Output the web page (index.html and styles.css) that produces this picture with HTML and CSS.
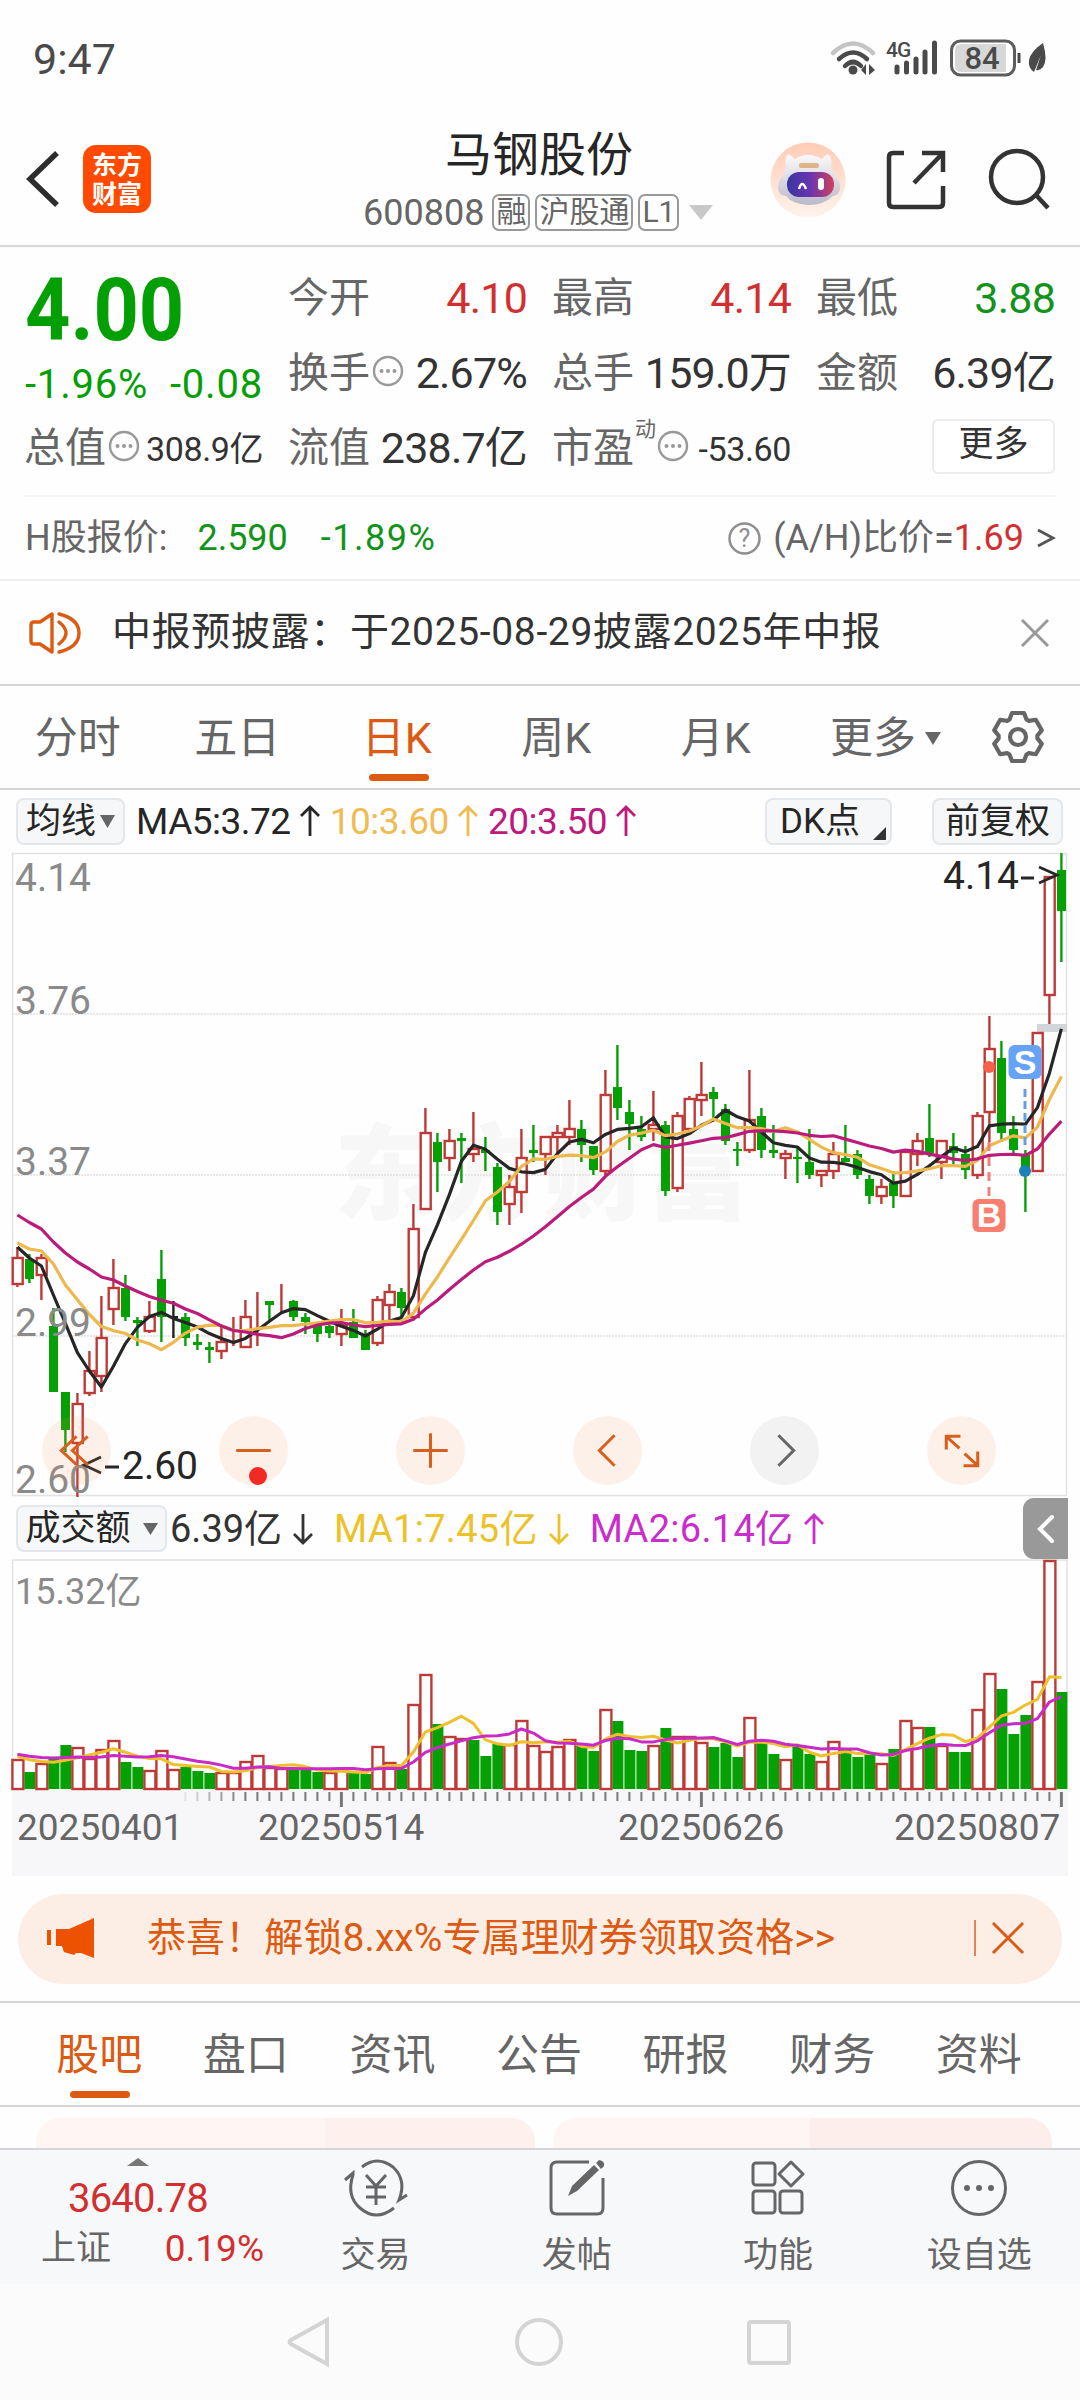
FILE: index.html
```html
<!DOCTYPE html>
<html lang="zh-CN">
<head>
  <meta charset="UTF-8" />
  <title>马钢股份 600808</title>
  <link rel="stylesheet" href="styles.css">
</head>
<body>
  <div class="statusbar">
    <span class="time">9:47</span>
    <svg class="status-icons" width="220" height="44" viewBox="828 36 220 44">
      <g fill="none" stroke-width="4.5" stroke-linecap="round">
        <path d="M833 53Q853 34 873 53" stroke="#c4c4c4" />
        <path d="M839 59Q853 46 867 59" stroke="#4a4a4a" />
        <path d="M845 66Q853 58 861 66" stroke="#4a4a4a" />
      </g>
      <circle cx="853" cy="70" r="4.5" fill="#4a4a4a" />
      <path d="M866 64V75L861 70ZM869 75V64L875 70Z" fill="#4a4a4a" />
      <text x="886" y="57" class="net">4G</text>
      <g stroke="#4a4a4a" stroke-width="5" stroke-linecap="round">
        <path d="M897 67V72M906.500 63V72M916 59V72M925 52V72M934.500 43V72" />
      </g>
      <rect x="951.500" y="41" width="63" height="34" rx="9" fill="none" stroke="#5c5c5c" stroke-width="3" />
      <path d="M961 44H1006V72H961Q955 72 955 66V50Q955 44 961 44Z" fill="#d8d8d8" />
      <text x="982" y="69" class="batt">84</text>
      <path d="M1019 53V63" stroke="#4a4a4a" stroke-width="3" />
      <path d="M1043 43Q1048 60 1043 67Q1040 71 1036 70L1041 55L1034 72Q1028 68 1029 60Q1031 51 1043 43Z" fill="#4a4a4a" />
    </svg>
  </div>

  <header class="header">
    <svg class="back" width="36" height="58" viewBox="0 0 36 58"><path d="M32 3L5 29L32 55" fill="none" stroke="#2d2d2d" stroke-width="5.500" /></svg>
    <div class="logo"><span>东方</span><span>财富</span></div>
    <div class="title">
      <h1>马钢股份</h1>
      <div class="code">
        <span>600808</span><i>融</i><i>沪股通</i><i>L1</i>
        <svg width="24" height="15" viewBox="0 0 24 15"><path d="M0 0H24L12 15Z" fill="#c9c9c9" /></svg>
      </div>
    </div>
    <div class="actions">
      <svg width="76" height="76" viewBox="0 0 76 76">
        <defs>
          <linearGradient id="halo" x1="0" y1="0" x2="0" y2="1"><stop offset="0" stop-color="#ffccb5" /><stop offset="1" stop-color="#fff3ed" /></linearGradient>
          <linearGradient id="visor"><stop offset="0" stop-color="#3b35a0" /><stop offset=".5" stop-color="#6a35b0" /><stop offset="1" stop-color="#d0405e" /></linearGradient>
          <linearGradient id="shell" x1="0" y1="0" x2="0" y2="1"><stop offset="0" stop-color="#fbfbfd" /><stop offset="1" stop-color="#b9b9c8" /></linearGradient>
        </defs>
        <circle cx="38" cy="38" r="37.500" fill="url(#halo)" />
        <path d="M16 24Q14 16 18 12Q22 14 25 17Q38 9 52 17Q55 13 58 12Q63 17 61 25Q64 31 65 35Q71 38 70 47Q69 53 63 54Q54 63 38 63Q22 62 16 54Q8 53 8 46Q8 38 13 34Q14 28 16 24Z" fill="url(#shell)" />
        <rect x="29" y="21" width="20" height="5" rx="2" fill="#e0b489" />
        <rect x="17" y="30" width="47" height="25" rx="12" fill="url(#visor)" />
        <path d="M29 47Q32 37 36 47" fill="none" stroke="#fff" stroke-width="2.500" />
        <rect x="48" y="36" width="6" height="12" rx="3" fill="#fff" />
      </svg>
      <svg width="60" height="60" viewBox="0 0 60 60"><path d="M18 3H7Q3 3 3 7V53Q3 57 7 57H53Q57 57 57 53V36M36 3H57V22M57 3L28 33" fill="none" stroke="#333" stroke-width="4.500" /></svg>
      <svg width="62" height="62" viewBox="0 0 62 62"><circle cx="29" cy="28" r="26" fill="none" stroke="#333" stroke-width="4.500" /><path d="M48 46L60 59" stroke="#333" stroke-width="4.500" /></svg>
    </div>
  </header>

  <section class="quote">
    <div class="price">
      <b>4.00</b>
      <div><span>-1.96%</span><span>-0.08</span></div>
    </div>
    <div class="cell"><label>今开</label><em class="up">4.10</em></div>
    <div class="cell"><label>最高</label><em class="up">4.14</em></div>
    <div class="cell"><label>最低</label><em class="down">3.88</em></div>
    <div class="cell"><label>换手</label><svg class="dots" viewBox="0 0 32 32"><use href="#dots" /></svg><em>2.67%</em></div>
    <div class="cell"><label>总手</label><em>159.0万</em></div>
    <div class="cell"><label>金额</label><em>6.39亿</em></div>
    <div class="cell"><label>总值</label><svg class="dots" viewBox="0 0 32 32"><use href="#dots" /></svg><em class="sm">308.9亿</em></div>
    <div class="cell"><label>流值</label><em>238.7亿</em></div>
    <div class="cell pe"><label>市盈<sup>动</sup></label><svg class="dots" viewBox="0 0 32 32"><use href="#dots" /></svg><em class="sm">-53.60</em></div>
    <div class="cell"><button class="more">更多</button></div>
  </section>

  <section class="hshare">
    <span class="h-label">H股报价:</span>
    <span class="down h-price">2.590</span>
    <span class="down h-pct">-1.89%</span>
    <svg class="help" width="33" height="33" viewBox="0 0 33 33"><circle cx="16.500" cy="16.500" r="15" fill="none" stroke="#8f8f8f" stroke-width="2.500" /><text x="16.500" y="25">?</text></svg>
    <span class="ratio">(A/H)比价=<span class="up">1.69</span></span>
    <svg width="20" height="20" viewBox="0 0 20 20"><path d="M2 2L17 10L2 18" fill="none" stroke="#555" stroke-width="2.800" /></svg>
  </section>

  <section class="news">
    <svg width="53" height="44" viewBox="0 0 53 44">
      <g fill="none" stroke="#dd5a12" stroke-width="3.400">
        <path d="M23 3V41L11 33H5Q2 33 2 30V14Q2 11 5 11H11Z" stroke-linejoin="round" />
        <path d="M30 11Q44 22 30 33M30 3Q50 8 50 22Q50 36 30 41" stroke-linecap="round" />
      </g>
    </svg>
    <p>中报预披露：于2025-08-29披露2025年中报</p>
    <svg width="30" height="30" viewBox="0 0 30 30"><path d="M2 2L28 28M28 2L2 28" stroke="#999" stroke-width="3" /></svg>
  </section>

  <nav class="periods">
    <a>分时</a><a>五日</a><a class="on">日K</a><a>周K</a><a>月K</a>
    <a class="wide">更多<svg width="16" height="13" viewBox="0 0 16 13"><path d="M0 0H16L8 13Z" fill="#666" /></svg></a>
    <svg class="gear" width="54" height="54" viewBox="-27 -27 54 54">
      <g fill="none" stroke="#666" stroke-width="4.200" stroke-linejoin="round">
        <path d="M-8.500 -17.500L-6 -24H6L8.500 -17.500L10.900 -16.100L17.800 -17.200L23.800 -6.800L19.400 -1.400V1.400L23.800 6.800L17.800 17.200L10.900 16.100L8.500 17.500L6 24H-6L-8.500 17.500L-10.900 16.100L-17.800 17.200L-23.800 6.800L-19.400 1.400V-1.400L-23.800 -6.800L-17.800 -17.200L-10.900 -16.100Z" />
        <circle r="8" />
      </g>
    </svg>
  </nav>

  <div class="legend">
    <span class="chip avg">均线<svg width="15" height="13" viewBox="0 0 15 13"><path d="M0 0H15L7.500 13Z" fill="#666" /></svg></span>
    <span class="ma ma5">MA5:3.72<svg viewBox="0 0 20 32"><use href="#arrow" /></svg></span>
    <span class="ma ma10">10:3.60<svg viewBox="0 0 20 32"><use href="#arrow" /></svg></span>
    <span class="ma ma20">20:3.50<svg viewBox="0 0 20 32"><use href="#arrow" /></svg></span>
    <span class="chip dk">DK点<svg width="13" height="13" viewBox="0 0 13 13"><path d="M13 0V13H0Z" fill="#333" /></svg></span>
    <span class="chip adj">前复权</span>
  </div>

  <div class="kline">
    <svg id="kline" width="1056" height="644" viewBox="12 853 1056 644"></svg>
    <div class="controls">
      <span><svg viewBox="0 0 68 68"><path d="M34 20L19 34L34 48M45 20L30 34L45 48" /></svg></span>
      <span><svg viewBox="0 0 68 68"><path d="M17 34H51" /></svg></span>
      <span><svg viewBox="0 0 68 68"><path d="M17 34H51M34 17V51" /></svg></span>
      <span><svg viewBox="0 0 68 68"><path d="M41 19L26 34L41 49" /></svg></span>
      <span class="off"><svg viewBox="0 0 68 68"><path d="M28 19L43 34L28 49" /></svg></span>
      <span><svg viewBox="0 0 68 68"><path d="M19 33V20H33M20 21L32 32M37 37L49 48M50 35V49H36" /></svg></span>
      <i class="dot"></i>
    </div>
  </div>

  <div class="legend vol-legend">
    <span class="chip vol">成交额<svg width="15" height="12" viewBox="0 0 15 12"><path d="M0 0H15L7.500 12Z" fill="#666" /></svg></span>
    <span class="ma v0">6.39亿<svg viewBox="0 0 20 32"><use href="#arrow" transform="rotate(180 10 16)" /></svg></span>
    <span class="ma v1">MA1:7.45亿<svg viewBox="0 0 20 32"><use href="#arrow" transform="rotate(180 10 16)" /></svg></span>
    <span class="ma v2">MA2:6.14亿<svg viewBox="0 0 20 32"><use href="#arrow" /></svg></span>
    <span class="fold"><svg width="18" height="30" viewBox="0 0 18 30"><path d="M15 3L3 15L15 27" fill="none" stroke="#fff" stroke-width="4" stroke-linecap="round" /></svg></span>
  </div>

  <div class="volume">
    <svg id="volume" width="1056" height="316" viewBox="12 1560 1056 316"></svg>
  </div>

  <div class="banner">
    <svg width="48" height="40" viewBox="0 0 48 40"><path d="M0 12H4V27H0ZM9 11H22L47 0V40L34 35H29L27 37L17 34L15 28H9Z" fill="#ec5200" /></svg>
    <p>恭喜！解锁8.xx%专属理财券领取资格&gt;&gt;</p>
    <i></i>
    <svg width="34" height="34" viewBox="0 0 34 34"><path d="M2 2L32 32M32 2L2 32" stroke="#dd5a12" stroke-width="3" /></svg>
  </div>

  <nav class="sections">
    <a class="on">股吧</a><a>盘口</a><a>资讯</a><a>公告</a><a>研报</a><a>财务</a><a>资料</a>
  </nav>

  <div class="cards">
    <div></div>
    <div></div>
  </div>

  <footer class="toolbar">
    <div class="index">
      <svg width="22" height="8" viewBox="0 0 22 8"><path d="M11 0L22 8H0Z" fill="#777" /></svg>
      <b>3640.78</b>
      <div><span>上证</span><em>0.19%</em></div>
    </div>
    <a>
      <svg width="66" height="60" viewBox="0 0 66 60">
        <g fill="none" stroke="#666" stroke-width="3">
          <path d="M2 22L10 15V17Q3 38 17 50Q33 64 51 50M19 9Q34 -3 50 9Q64 22 56 42L64 37" />
          <path d="M23 17L33 28L43 17M23 29H43M23 39H43M33 28V47" />
        </g>
      </svg>
      交易
    </a>
    <a>
      <svg width="60" height="60" viewBox="0 0 60 60">
        <path d="M42 4H10Q4 4 4 10V50Q4 56 10 56H50Q56 56 56 50V20" fill="none" stroke="#666" stroke-width="3" />
        <path d="M21 38L25 28L47 7L52 12L30 33ZM49 5L52 2Q58 3 57 8L54 11Z" fill="#666" />
      </svg>
      发帖
    </a>
    <a>
      <svg width="60" height="60" viewBox="0 0 60 60">
        <g fill="none" stroke="#666" stroke-width="3">
          <rect x="5" y="5" width="22" height="22" rx="3" /><rect x="5" y="33" width="22" height="22" rx="3" /><rect x="32" y="33" width="22" height="22" rx="3" />
          <path d="M43 4L55 16L43 28L31 16Z" stroke-linejoin="round" />
        </g>
      </svg>
      功能
    </a>
    <a>
      <svg width="60" height="60" viewBox="0 0 60 60">
        <circle cx="30" cy="30" r="26.500" fill="none" stroke="#666" stroke-width="3" />
        <g fill="#666"><circle cx="18" cy="30" r="3" /><circle cx="30" cy="30" r="3" /><circle cx="42" cy="30" r="3" /></g>
      </svg>
      设自选
    </a>
  </footer>

  <div class="sysnav">
    <svg width="44" height="50" viewBox="0 0 44 50"><path d="M40 3V47L4 27Q1 25 4 23Z" /></svg>
    <svg width="50" height="50" viewBox="0 0 50 50"><circle cx="25" cy="25" r="22" /></svg>
    <svg width="46" height="50" viewBox="0 0 46 50"><rect x="3" y="5" width="40" height="41" rx="2" /></svg>
  </div>

  <svg width="0" height="0" class="defs">
    <symbol id="dots" viewBox="0 0 32 32"><circle cx="16" cy="16" r="14" fill="none" stroke="#999" stroke-width="2.400" /><circle cx="9.500" cy="16" r="2" fill="#999" /><circle cx="16" cy="16" r="2" fill="#999" /><circle cx="22.500" cy="16" r="2" fill="#999" /></symbol>
    <path id="arrow" d="M10 31V2M1 11L10 2L19 11" fill="none" stroke="currentColor" stroke-width="2.800" />
  </svg>

  <script>
    const RED = "#bf3a36", GREEN = "#04a004", STEP = 12, X0 = 17.4;

    // [direction, high, body top, body bottom, low], y values in chart pixels
    const candles = [
      ["r",1247,1258,1284,1287],["g",1254,1259,1279,1283],["r",1254,1258,1275,1300],["g",1308,1326,1392,1392],
      ["g",1392,1392,1430,1452],["r",1393,1404,1443,1497],["r",1351,1371,1393,1396],["r",1296,1338,1376,1392],
      ["r",1259,1288,1309,1325],["g",1275,1288,1317,1321],["g",1317,1320,1323,1346],["r",1301,1317,1331,1333],
      ["g",1250,1279,1317,1342],["k",1301,1316,1318,1338],["g",1313,1317,1338,1346],["g",1334,1342,1345,1350],
      ["g",1342,1347,1350,1363],["r",1327,1342,1351,1359],["r",1317,1338,1338,1346],["r",1300,1317,1347,1347],
      ["r",1292,1304,1304,1346],["g",1301,1301,1305,1321],["r",1284,1300,1300,1313],["g",1300,1301,1317,1321],
      ["g",1313,1317,1322,1334],["g",1325,1326,1334,1342],["g",1325,1326,1333,1338],["r",1309,1325,1334,1346],
      ["g",1309,1322,1338,1338],["g",1330,1335,1350,1350],["r",1296,1300,1343,1346],["r",1284,1292,1305,1322],
      ["g",1288,1292,1308,1317],["r",1204,1229,1317,1317],["r",1108,1133,1209,1209],["g",1133,1142,1162,1192],
      ["r",1129,1141,1158,1171],["g",1133,1138,1141,1183],["r",1112,1149,1154,1162],["g",1137,1150,1153,1171],
      ["g",1163,1167,1212,1225],["r",1175,1187,1204,1225],["r",1129,1158,1192,1213],["g",1125,1150,1153,1162],
      ["r",1137,1137,1154,1175],["r",1125,1133,1137,1155],["r",1100,1129,1137,1145],["g",1120,1129,1145,1162],
      ["g",1146,1146,1170,1175],["r",1070,1095,1171,1175],["g",1045,1087,1108,1120],["g",1100,1112,1124,1150],
      ["g",1116,1129,1137,1141],["r",1091,1125,1129,1141],["g",1121,1125,1191,1196],["r",1112,1116,1188,1192],
      ["r",1096,1099,1129,1129],["r",1062,1095,1100,1116],["g",1087,1092,1099,1120],["g",1104,1109,1141,1145],
      ["g",1142,1149,1150,1166],["r",1070,1120,1150,1153],["g",1108,1116,1150,1158],["g",1125,1150,1153,1158],
      ["r",1150,1154,1158,1179],["g",1146,1157,1158,1183],["g",1129,1162,1175,1179],["r",1170,1171,1175,1187],
      ["r",1142,1154,1171,1179],["g",1125,1158,1162,1162],["g",1150,1154,1175,1179],["g",1175,1179,1196,1204],
      ["r",1179,1187,1196,1204],["g",1171,1183,1196,1208],["r",1152,1152,1196,1196],["r",1133,1141,1154,1166],
      ["g",1104,1138,1153,1157],["r",1141,1141,1162,1179],["g",1133,1146,1153,1165],["g",1146,1154,1170,1179],
      ["r",1112,1116,1175,1179],["r",1016,1049,1112,1142],["g",1041,1058,1133,1142],["g",1116,1129,1150,1153],
      ["g",1150,1155,1173,1212],["r",1033,1033,1171,1171],["r",877,877,995,1024],["g",853,870,911,962]
    ];
    // closes before the visible range, needed by the averages
    const prevCloses = [1128,1128,1132,1210,1224,1231,1178,1228,1197,1214,1219,1238,1262,1220,1256,1224,1218,1247,1288];

    const volumes = [30,17,26,32,44,42,31,40,49,27,22,19,39,20,22,18,16,17,17,28,34,22,21,21,19,17,17,20,17,15,43,27,20,85,115,65,53,51,49,33,45,45,69,44,38,43,50,43,38,80,68,39,38,44,61,53,53,47,42,46,32,72,47,35,30,42,35,28,48,40,32,35,26,40,69,62,62,44,37,37,80,116,100,55,74,108,229,97];
    const prevVolumes = [38,38,38,38,36,36,35,35,34];
    const volColors = "rgrggrrrrggrrrgggrrrrrrgggrrggrrgrrgrrgggrrrrrrggrgggrgrrrgggrggrggrrgggrgrrgrggrrgggrrg";

    const x = i => X0 + i * STEP;

    function average(prev, values, n) {
      const all = prev.concat(values);
      return values.map((v, i) => {
        const end = prev.length + i + 1;
        return all.slice(end - n, end).reduce((a, b) => a + b, 0) / n;
      });
    }

    function line(ys, color, width) {
      const pts = ys.map((y, i) => `${x(i)},${y.toFixed(1)}`).join(" ");
      return `<polyline points="${pts}" fill="none" stroke="${color}" stroke-width="${width}" stroke-linejoin="round"/>`;
    }

    function drawKline() {
      let s = `<text class="watermark" x="542" y="1212">东方财富</text>`;
      [1014, 1175, 1336].forEach(y => {
        s += `<path d="M12 ${y}H1067" stroke="#e0e0e0" stroke-width="1.500" stroke-dasharray="2 1"/>`;
      });
      s += `<rect x="12.500" y="853.500" width="1054" height="642" fill="none" stroke="#e2e2e2" stroke-width="1.500"/>`;
      s += `<rect x="1037" y="1024" width="30" height="8" fill="#d2d5da"/>`;
      candles.forEach(([d, high, top, bottom, low], i) => {
        const cx = x(i);
        if (d === "r") {
          s += `<path d="M${cx} ${high}V${top}M${cx} ${bottom}V${low}" stroke="${RED}" stroke-width="2.400"/>`;
          s += `<rect x="${cx - 4.7}" y="${top}" width="10" height="${bottom - top}" fill="${bottom - top > 3 ? "#fff" : "none"}" stroke="${RED}" stroke-width="2.400"/>`;
        } else {
          const color = d === "k" ? "#222" : GREEN;
          s += `<path d="M${cx} ${high}V${low}" stroke="${color}" stroke-width="2.400"/>`;
          s += `<rect x="${cx - 4.4}" y="${top}" width="9" height="${Math.max(bottom - top, 2)}" fill="${color}"/>`;
        }
      });
      const closes = candles.map(c => c[0] === "r" ? c[2] : c[3]);
      s += line(average(prevCloses, closes, 5), "#262626", 3.2);
      s += line(average(prevCloses, closes, 10), "#edb84e", 3.2);
      s += line(average(prevCloses, closes, 20), "#bb1c7c", 3.2);

      // buy / sell marks
      s += `<path d="M989 1142V1199" stroke="#ef8172" stroke-width="3" stroke-dasharray="9 6"/><circle cx="989" cy="1067" r="6" fill="#f6604c"/>`;
      s += `<rect x="972.500" y="1199" width="33" height="33" rx="6" fill="#f97e6f"/><text class="mark" x="989" y="1227">B</text>`;
      s += `<path d="M1025 1089V1148" stroke="#5fa0e6" stroke-width="3" stroke-dasharray="8 4"/><circle cx="1025" cy="1171" r="6" fill="#1a80b8"/>`;
      s += `<rect x="1008.500" y="1045" width="33" height="34" rx="6" fill="#66a3f8"/><text class="mark" x="1025" y="1074">S</text>`;

      [["4.14", 891], ["3.76", 1014], ["3.37", 1175], ["2.99", 1336], ["2.60", 1493]].forEach(([t, y]) => {
        s += `<text class="axis" x="15" y="${y}">${t}</text>`;
      });
      s += `<text class="peak" x="943" y="889">4.14</text><path d="M1021 878H1034M1039 867L1057 875L1039 883" class="tip"/>`;
      s += `<text class="peak" x="122" y="1479">2.60</text><path d="M119 1467H105M101 1457L84 1465L101 1473" class="tip"/>`;
      document.getElementById("kline").innerHTML = s;
    }

    function drawVolume() {
      const base = 1789;
      let s = `<rect x="12" y="1790" width="1056" height="86" fill="#f7f7f9"/>`;
      s += `<path d="M12.500 1790V1560H1067V1790" fill="none" stroke="#e2e2e2" stroke-width="1.500"/>`;
      volumes.forEach((h, i) => {
        if (volColors[i] === "r") {
          s += `<rect x="${x(i) - 5}" y="${base - h + 1}" width="11" height="${h - 1}" fill="#fff" stroke="${RED}" stroke-width="2.400"/>`;
        } else {
          s += `<rect x="${x(i) - 5}" y="${base - h}" width="11" height="${h}" fill="${GREEN}"/>`;
        }
        if (i >= 14) {
          const big = i === 27 || i === 57 || i === 87;
          s += `<path d="M${x(i)} 1792V${big ? 1807 : 1801}" stroke="#777" stroke-width="${big ? 3 : 2}" opacity="${Math.min(1, (i - 13) / 6)}"/>`;
        }
      });
      s += line(average(prevVolumes, volumes, 5).map(v => 1790 - v), "#edc02c", 3);
      s += line(average(prevVolumes, volumes, 10).map(v => 1790 - v), "#ca2bc8", 3);
      s += `<text class="axis top" x="15" y="1604">15.32亿</text>`;
      [["20250401", 17], ["20250514", 258], ["20250626", 618], ["20250807", 894]].forEach(([t, tx]) => {
        s += `<text class="date" x="${tx}" y="1840">${t}</text>`;
      });
      document.getElementById("volume").innerHTML = s;
    }

    drawKline();
    drawVolume();
  </script>
</body>
</html>
```
FILE: styles.css
```css
* {
  box-sizing: border-box;
}

body {
  margin: 0;
  width: 1080px;
  height: 2400px;
  overflow: hidden;
  background: #fefefe;
  color: #333;
  font-family: Roboto, "Noto Sans CJK SC", sans-serif;
  line-height: 1;
}

svg {
  display: block;
  flex: none;
  overflow: visible;
}

em, i {
  font-style: normal;
}

.defs {
  position: absolute;
}

.up {
  color: #d23030 !important;
}

.down {
  color: #12931a !important;
}

.statusbar {
  height: 116px;
  padding: 0 32px 0 33px;
  display: flex;
  align-items: center;
  justify-content: space-between;
}

.time {
  font-size: 43px;
  color: #4a4a4a;
  padding-top: 3px;
}

.net {
  font-size: 21px;
  font-weight: 500;
  letter-spacing: -1px;
  fill: #4a4a4a;
}

.batt {
  font-size: 31px;
  font-weight: 500;
  text-anchor: middle;
  fill: #4a4a4a;
}

.header {
  height: 131px;
  display: flex;
  align-items: flex-start;
  border-bottom: 2px solid #d9d9dc;
}

.back {
  margin: 34px 0 0 25px;
}

.logo {
  width: 68px;
  height: 68px;
  margin: 29px 0 0 22px;
  padding-top: 8px;
  border-radius: 13px;
  background: #ff4a00;
  color: #fff;
  display: flex;
  flex-direction: column;
  align-items: center;
  gap: 4px;
  font-size: 25px;
  font-weight: 700;
}

.title {
  width: 350px;
  margin-left: 212px;
  padding-top: 15px;
  display: flex;
  flex-direction: column;
}

.title h1 {
  margin: 0 0 16px 82px;
  font-size: 47px;
  font-weight: 400;
  color: #262626;
}

.code {
  display: flex;
  align-items: center;
  font-size: 36px;
  white-space: nowrap;
  color: #666;
}

.code span {
  margin-right: 8px;
}

.code i {
  height: 37px;
  padding: 0 2px;
  margin-right: 5px;
  border: 2px solid #999;
  border-radius: 7px;
  font-size: 30px;
  line-height: 32px;
}

.code svg {
  margin-left: 5px;
}

.actions {
  display: flex;
  align-items: center;
  margin: 26px 0 0 57px;
}

.actions svg + svg {
  margin-left: 40px;
}

.actions svg:last-child {
  margin-left: 42px;
}

.quote {
  height: 250px;
  margin: 0 25px;
  padding-top: 14px;
  border-bottom: 2px solid #f4f4f4;
  display: grid;
  grid-template-columns: repeat(4, 238px);
  grid-auto-rows: 75px;
  column-gap: 26px;
}

.price {
  grid-row: span 2;
  color: #049f04;
}

.price b {
  display: block;
  font-size: 88px;
  font-weight: 700;
  height: 104px;
  padding-top: 5px;
  transform: scaleX(.9);
  transform-origin: left;
}

.price div {
  display: flex;
  justify-content: space-between;
  font-size: 40px;
  letter-spacing: .8px;
}

.cell {
  display: flex;
  align-items: center;
  white-space: nowrap;
}

.cell label {
  position: relative;
  margin-left: -1px;
  font-size: 41px;
  color: #666;
}

.cell em {
  margin-left: auto;
  font-size: 43px;
  letter-spacing: -.8px;
}

.cell em.sm {
  font-size: 34px;
  letter-spacing: -.4px;
}

.cell sup {
  position: absolute;
  left: 83px;
  top: -9px;
  font-size: 21px;
  line-height: 1;
}

.dots {
  width: 32px;
  height: 32px;
  margin: 0 0 6px 2px;
}

.pe .dots {
  margin-left: 23px;
}

.more {
  width: 123px;
  height: 55px;
  margin: 0 0 4px auto;
  padding: 0 0 5px;
  border: 2px solid #ececec;
  border-radius: 6px;
  background: #fff;
  font: 35px/1 Roboto, "Noto Sans CJK SC", sans-serif;
  color: #333;
}

.hshare {
  height: 84px;
  padding: 0 24px 0 25px;
  border-bottom: 2px solid #efefef;
  display: flex;
  align-items: center;
  font-size: 36px;
  color: #666;
}

.h-price {
  margin-left: 30px;
}

.h-pct {
  margin-left: 33px;
  letter-spacing: 1.5px;
}

.help {
  margin: 0 12px 0 auto;
}

.help text {
  font-size: 25px;
  text-anchor: middle;
  fill: #8f8f8f;
}

.ratio {
  margin-right: 12px;
}

.news {
  height: 105px;
  padding: 0 30px 0 29px;
  border-bottom: 2px solid #d5d5d7;
  display: flex;
  align-items: center;
}

.news p {
  flex: 1;
  margin: 0 0 0 30px;
  font-size: 39px;
  letter-spacing: .65px;
}

.periods {
  height: 104px;
  padding-right: 35px;
  border-bottom: 2px solid #d5d5d7;
  display: flex;
  align-items: center;
}

.periods a,
.sections a {
  position: relative;
  width: 159.5px;
  height: 102px;
  padding: 3px 2px 0 0;
  display: flex;
  align-items: center;
  justify-content: center;
  font-size: 43px;
  color: #666;
}

.periods a {
  padding-right: 4px;
}

.periods a.wide {
  width: 180px;
}

.periods a.wide svg {
  margin-left: 9px;
}

.periods a.on,
.sections a.on {
  color: #dd5a12;
}

.on::after {
  content: "";
  position: absolute;
  left: 50%;
  bottom: 7px;
  width: 60px;
  height: 7px;
  margin-left: -30px;
  border-radius: 4px;
  background: #dd5a12;
}

.gear {
  margin-left: auto;
}

.legend {
  height: 62px;
  padding: 0 17px 0 16px;
  display: flex;
  align-items: center;
}

.chip {
  height: 47px;
  display: flex;
  align-items: center;
  justify-content: center;
  border: 2px solid #e3e6ea;
  border-radius: 8px;
  background: #f6f7f9;
  font-size: 35px;
  color: #262626;
}

.avg {
  width: 109px;
  margin-right: 11px;
}

.avg svg {
  margin-left: 4px;
}

.dk {
  position: relative;
  width: 127px;
  margin-left: auto;
  padding-right: 17px;
}

.dk svg {
  position: absolute;
  right: 4px;
  bottom: 3px;
}

.adj {
  width: 131px;
  margin-left: 40px;
}

.ma {
  display: flex;
  align-items: center;
  font-size: 37px;
  letter-spacing: -.5px;
}

.ma svg {
  width: 20px;
  height: 32px;
  margin: 0 10px 0 9px;
}

.ma5 {
  color: #262626;
}

.ma10 {
  color: #efbb52;
}

.ma20 {
  color: #bd1a7e;
}

.kline {
  position: relative;
  height: 644px;
  padding-left: 12px;
  margin-top: 1px;
}

.watermark {
  font-size: 104px;
  font-weight: 900;
  text-anchor: middle;
  fill: #f7f7f7;
}

.axis {
  font-size: 39px;
  fill: #8a8a8a;
}

.axis.top {
  font-size: 36px;
}

.peak {
  font-size: 39px;
  fill: #262626;
}

.tip {
  fill: none;
  stroke: #262626;
  stroke-width: 2.8;
}

.mark {
  font: bold 34px "Liberation Sans", sans-serif;
  text-anchor: middle;
  fill: #fff;
}

.controls {
  position: absolute;
  left: 42px;
  right: 84px;
  bottom: 12px;
  display: flex;
  justify-content: space-between;
}

.controls span {
  width: 69px;
  height: 69px;
  border-radius: 50%;
  background: rgba(250, 140, 80, .12);
}

.controls .off {
  background: #f2f2f2;
}

.controls path {
  fill: none;
  stroke: #d8601c;
  stroke-width: 3;
}

.controls .off path {
  stroke: #666;
}

.controls .dot {
  position: absolute;
  left: 207px;
  bottom: 0;
  width: 18px;
  height: 18px;
  border-radius: 50%;
  background: #f22a24;
}

.vol-legend {
  position: relative;
  height: 63px;
  padding-right: 12px;
}

.vol {
  width: 151px;
  margin-right: 3px;
}

.vol svg {
  margin-left: 12px;
}

.vol-legend .ma {
  font-size: 38px;
  letter-spacing: 0;
}

.vol-legend .ma svg {
  height: 34px;
  margin: 0 21px 0 11px;
}

.vol-legend .v1 {
  color: #ecc22a;
  letter-spacing: .3px;
}

.vol-legend .v2 {
  color: #c92dcb;
  letter-spacing: .3px;
}

.fold {
  width: 45px;
  height: 61px;
  margin-left: auto;
  display: flex;
  align-items: center;
  justify-content: center;
  border-radius: 11px 0 0 11px;
  background: #999;
}

.volume {
  height: 316px;
  padding-left: 12px;
}

.date {
  font-size: 37px;
  fill: #666;
}

.banner {
  height: 90px;
  margin: 18px 18px 17px;
  padding: 0 37px 2px 29px;
  border-radius: 45px;
  background: #fceee5;
  display: flex;
  align-items: center;
}

.banner p {
  flex: 1;
  margin: 0 0 0 52px;
  font-size: 39px;
  letter-spacing: .1px;
  color: #dd5a12;
}

.banner i {
  width: 2px;
  height: 36px;
  margin-right: 15px;
  background: #e0854f;
}

.sections {
  height: 106px;
  padding: 0 27px;
  border-top: 2px solid #d5d5d7;
  border-bottom: 2px solid #d5d5d7;
  display: flex;
}

.sections a {
  flex: 1;
}

.cards {
  height: 41px;
  padding: 11px 28px 0 36px;
  display: flex;
  gap: 18px;
}

.cards div {
  flex: 1;
  border-radius: 24px 24px 0 0;
  background: linear-gradient(90deg, #fff6f3 0, #fff5f2 58%, #fdf0ed 58%);
}

.cards div + div {
  background: linear-gradient(90deg, #fff6f3 0, #fff5f2 51.5%, #feeeeb 51.5%);
}

.toolbar {
  height: 136px;
  border-top: 2px solid #d5d5d9;
  background: #f7f8fa;
  display: flex;
}

.toolbar a {
  flex: 1;
  padding-top: 8px;
  display: flex;
  flex-direction: column;
  align-items: center;
  gap: 20px;
  font-size: 35px;
  color: #666;
}

.index {
  width: 275px;
  padding: 8px 11px 0 41px;
}

.index svg {
  margin: 0 0 13px 86px;
}

.index b {
  display: block;
  margin: 0 0 11px 27px;
  font-size: 40px;
  font-weight: 400;
  letter-spacing: -.8px;
  color: #d23030;
}

.index div {
  display: flex;
  align-items: center;
  justify-content: space-between;
  font-size: 35px;
  color: #666;
}

.index em {
  font-size: 37px;
  color: #d23030;
}

.sysnav {
  height: 116px;
  padding: 0 288px 0 287px;
  background: #fbfbfb;
  display: flex;
  align-items: center;
  justify-content: space-between;
}

.sysnav path,
.sysnav circle,
.sysnav rect {
  fill: none;
  stroke: #d4d4d4;
  stroke-width: 4;
}
```
